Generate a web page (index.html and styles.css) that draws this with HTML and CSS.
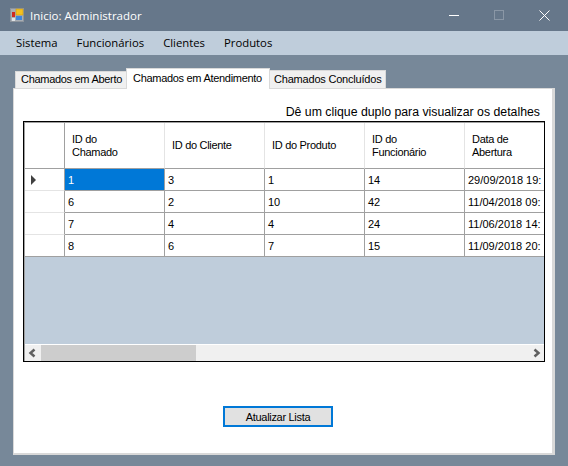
FILE: index.html
```html
<!doctype html>
<html lang="en">
  <head>
    <meta charset="UTF-8" />
    <meta name="viewport" content="width=device-width, initial-scale=1.0" />
    <title>Inicio: Administrador</title>
    <link rel="stylesheet" href="styles.css">
  </head>
  <body>
    <header class="titlebar">
      <svg class="app-icon" width="16" height="16" viewBox="0 0 16 16">
        <rect x="0.5" y="0.5" width="13" height="13" fill="#a8aeb5" stroke="#8d949c" />
        <rect x="6" y="1" width="7" height="6" fill="#f4c020" stroke="#c99a10" stroke-width="0.6" />
        <rect x="2" y="4" width="3" height="5" fill="#d02a20" />
        <rect x="6" y="8" width="6" height="4" fill="#3f86dc" />
        <rect x="2" y="10" width="3" height="3" fill="#dfe3e6" />
      </svg>
      <span class="titlebar-text">Inicio: Administrador</span>
      <div class="window-buttons">
        <svg width="10" height="11" viewBox="0 0 10 11"><path d="M0 5.5h10" stroke="#fff" fill="none" /></svg>
        <svg width="10" height="11" viewBox="0 0 10 11"><rect x="0.5" y="0.5" width="9" height="9" stroke="#8a97a6" fill="none" /></svg>
        <svg width="11" height="11" viewBox="0 0 11 11"><path d="M0.5 0.5l10 10M10.5 0.5l-10 10" stroke="#fff" fill="none" /></svg>
      </div>
    </header>

    <nav class="menubar">
      <a class="menu-item">Sistema</a>
      <a class="menu-item">Funcionários</a>
      <a class="menu-item">Clientes</a>
      <a class="menu-item">Produtos</a>
    </nav>

    <div class="tabs">
      <div class="tab tab-first">Chamados em Aberto</div>
      <div class="tab tab-active">Chamados em Atendimento</div>
      <div class="tab tab-last">Chamados Concluídos</div>
    </div>

    <main class="panel">
      <p class="hint">Dê um clique duplo para visualizar os detalhes</p>

      <div class="grid">
        <div class="grid-view">
          <table>
            <thead>
              <tr>
                <th class="row-head"></th>
                <th>ID do<br />Chamado</th>
                <th>ID do Cliente</th>
                <th>ID do Produto</th>
                <th>ID do<br />Funcionário</th>
                <th>Data de<br />Abertura</th>
              </tr>
            </thead>
            <tbody>
              <tr>
                <td class="row-head"><span class="row-arrow"></span></td>
                <td class="selected">1</td>
                <td>3</td>
                <td>1</td>
                <td>14</td>
                <td>29/09/2018 19:</td>
              </tr>
              <tr>
                <td class="row-head"></td>
                <td>6</td>
                <td>2</td>
                <td>10</td>
                <td>42</td>
                <td>11/04/2018 09:</td>
              </tr>
              <tr>
                <td class="row-head"></td>
                <td>7</td>
                <td>4</td>
                <td>4</td>
                <td>24</td>
                <td>11/06/2018 14:</td>
              </tr>
              <tr>
                <td class="row-head"></td>
                <td>8</td>
                <td>6</td>
                <td>7</td>
                <td>15</td>
                <td>11/09/2018 20:</td>
              </tr>
            </tbody>
          </table>
        </div>
        <div class="scrollbar">
          <svg class="scroll-arrow" width="16" height="16" viewBox="0 0 16 16"><path d="M9.5 4.5L5.5 8l4 3.5" stroke="#606060" stroke-width="2.5" fill="none" /></svg>
          <div class="scroll-track"><div class="scroll-thumb"></div></div>
          <svg class="scroll-arrow" width="16" height="16" viewBox="0 0 16 16"><path d="M6.5 4.5l4 3.5-4 3.5" stroke="#606060" stroke-width="2.5" fill="none" /></svg>
        </div>
      </div>

      <button class="refresh" type="button">Atualizar Lista</button>
    </main>
  </body>
</html>
```

FILE: styles.css
```css
html,
body {
  height: 100%;
}
body {
  margin: 0;
  overflow: hidden;
  background: #778899;
  font-family: "Liberation Sans", Arial, sans-serif;
  font-size: 11px;
  color: #000;
}

.titlebar {
  display: flex;
  align-items: center;
  height: 31px;
  padding-left: 10px;
  background: #66778a;
  color: #fff;
}
.app-icon {
  margin-right: 4px;
}
.titlebar-text {
  font-family: "Open Sans", sans-serif;
  font-size: 11.5px;
}
.window-buttons {
  display: flex;
  margin-left: auto;
  margin-right: 18px;
  gap: 35px;
}

.menubar {
  display: flex;
  align-items: center;
  box-sizing: border-box;
  height: 24px;
  padding: 0 0 1px 16px;
  gap: 19px;
  background: #bfcddb;
  font-family: "Open Sans", sans-serif;
  font-size: 11.3px;
}

.tabs {
  display: flex;
  align-items: flex-end;
  height: 21px;
  margin: 12px 0 0 15px;
  white-space: nowrap;
}
.tab {
  box-sizing: border-box;
  height: 17px;
  line-height: 17px;
  padding: 0 5px;
  background: #f0f0f0;
  border: 1px solid #d9d9d9;
  border-bottom: none;
  letter-spacing: -0.3px;
}
.tab-first {
  width: 111px;
  line-height: 15px;
  border-right: none;
}
.tab-active {
  width: 144px;
  height: 21px;
  line-height: 18px;
  margin-bottom: -1px;
  padding-left: 6px;
  background: #fff;
  position: relative;
  z-index: 1;
}
.tab-last {
  width: 116px;
  height: 18px;
  padding-left: 4px;
  border-left: none;
  letter-spacing: -0.2px;
}

.panel {
  display: flex;
  flex-direction: column;
  box-sizing: border-box;
  height: 367px;
  margin: 0 13px;
  padding: 0 9px;
  background: #fff;
  border: 1px solid #d9d9d9;
  border-right-width: 3px;
  border-bottom-width: 2px;
}
.hint {
  margin: 16px 3px 0 0;
  height: 16px;
  line-height: 15px;
  font-size: 12.3px;
  text-align: right;
}

.grid {
  display: flex;
  flex-direction: column;
  box-sizing: border-box;
  height: 241px;
  width: 522px;
  padding: 1px 0 0 1px;
  border: 1px solid #000;
  box-shadow: inset 1px 1px 0 #a0a0a0;
  background: #bfcddb;
}
.grid-view {
  flex: 1;
  overflow: hidden;
}
table {
  table-layout: fixed;
  width: 540px;
  border-collapse: separate;
  border-spacing: 0;
  background: #fff;
}
th {
  width: 100px;
  height: 46px;
  padding: 0 0 0 7px;
  box-sizing: border-box;
  border-right: 1px solid #e4e4e4;
  border-bottom: 1px solid #a0a0a0;
  font-weight: normal;
  text-align: left;
  line-height: 13px;
  letter-spacing: -0.3px;
}
td {
  height: 22px;
  padding: 0 0 0 3px;
  box-sizing: border-box;
  border-right: 1px solid #a0a0a0;
  border-bottom: 1px solid #a0a0a0;
  white-space: nowrap;
}
.row-head {
  width: 40px;
  padding: 0;
  border-right: 1px solid #a0a0a0;
}
td.row-head {
  border-bottom-color: #e4e4e4;
  vertical-align: middle;
}
tr:last-child td.row-head {
  border-bottom-color: #a0a0a0;
}
.row-arrow {
  display: block;
  width: 0;
  height: 0;
  margin-left: 6px;
  border-left: 5px solid #404040;
  border-top: 5px solid transparent;
  border-bottom: 5px solid transparent;
}
.selected {
  background: #0078d7;
  color: #fff;
}

.scrollbar {
  display: flex;
  align-items: stretch;
  height: 17px;
  flex: none;
  background: #f0f0f0;
  border-top: 1px solid #fff;
  box-sizing: border-box;
}
.scroll-arrow {
  flex: none;
}
.scroll-track {
  flex: 1;
}
.scroll-thumb {
  width: 155px;
  height: 100%;
  background: #cdcdcd;
}

.refresh {
  box-sizing: border-box;
  width: 110px;
  height: 21px;
  margin: 44px 0 0 200px;
  padding: 0;
  background: #e1e1e1;
  border: 2px solid #0078d7;
  font-family: inherit;
  font-size: 11px;
  letter-spacing: -0.3px;
  color: #000;
}
```
